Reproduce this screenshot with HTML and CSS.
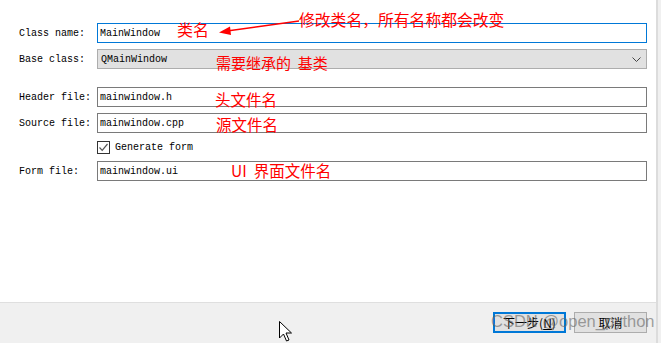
FILE: index.html
```html
<!DOCTYPE html>
<html lang="en">
<head>
    <meta charset="UTF-8">
    <title>Class Information</title>
    <link rel="stylesheet" href="styles.css">
</head>
<body>
    <div class="window">
        <div class="dialog">
            <div class="content">
                <div class="form">
                    <div class="row row-class">
                        <label class="label">Class name:</label>
                        <div class="field field-active">MainWindow</div>
                    </div>
                    <div class="row row-base">
                        <label class="label">Base class:</label>
                        <div class="field field-combo">
                            <span>QMainWindow</span>
                            <svg class="chevron" width="9" height="5" viewBox="0 0 9 5"><path d="M0.5 0.5 L4.5 4.5 L8.5 0.5" fill="none" stroke="#444" stroke-width="1"/></svg>
                        </div>
                    </div>
                    <div class="row row-header">
                        <label class="label">Header file:</label>
                        <div class="field">mainwindow.h</div>
                    </div>
                    <div class="row row-source">
                        <label class="label">Source file:</label>
                        <div class="field">mainwindow.cpp</div>
                    </div>
                    <div class="row row-check">
                        <span class="label"></span>
                        <div class="check">
                            <span class="box">
                                <svg width="11" height="11" viewBox="0 0 11 11"><path d="M1.5 5.5 L4.2 8.3 L9.5 2" fill="none" stroke="#555" stroke-width="1.2"/></svg>
                            </span>
                            <span>Generate form</span>
                        </div>
                    </div>
                    <div class="row row-form">
                        <label class="label">Form file:</label>
                        <div class="field">mainwindow.ui</div>
                    </div>
                </div>

                <!-- red notes drawn over the dialog -->
                <span class="note note-name">类名</span>
                <span class="note note-tip">修改类名，所有名称都会改变</span>
                <svg class="note-arrow" width="84" height="18" viewBox="0 0 84 18">
                    <line x1="82" y1="2" x2="10" y2="12" stroke="#ff0000" stroke-width="1.3"/>
                    <path d="M2 13.5 L13 7.5 L14 16 Z" fill="#ff0000"/>
                </svg>
                <span class="note note-base">需要继承的&nbsp; 基类</span>
                <span class="note note-header">头文件名</span>
                <span class="note note-source">源文件名</span>
                <span class="note note-form">UI&nbsp; 界面文件名</span>
            </div>
            <div class="footer">
                <button class="btn btn-default">下一步(<u>N</u>)</button>
                <button class="btn">取消</button>
                <span class="watermark">CSDN @open_python</span>
                <svg class="cursor" width="14" height="24" viewBox="0 0 14 24">
                    <path d="M0.5 0.5 L0.5 17 L4.5 13 L7.5 20 L10 19 L7 12 L12.5 12 Z" fill="#fff" stroke="#000" stroke-width="1"/>
                </svg>
            </div>
        </div>
        <div class="side"></div>
    </div>
</body>
</html>
```

FILE: styles.css
```css
body {
    margin: 0;
    background: #ffffff;
    font-family: "Liberation Mono", "DejaVu Sans Mono", monospace;
    font-size: 10px;
    color: #000;
}
.window {
    display: flex;
    width: 661px;
    height: 343px;
    overflow: hidden;
}
.dialog {
    width: 656px;
    display: flex;
    flex-direction: column;
}
.side {
    width: 5px;
    background: #f0f0f0;
    border-left: 2px solid #dcdcdc;
    box-sizing: border-box;
}
.content {
    position: relative;
    height: 302px;
    background: #fff;
}
.form {
    display: flex;
    flex-direction: column;
    padding-top: 23px;
}
.row {
    display: flex;
    align-items: center;
    height: 20px;
}
.row-base { margin-top: 6px; }
.row-header { margin-top: 18px; }
.row-source { margin-top: 6px; }
.row-check { margin-top: 4px; }
.row-form { margin-top: 4px; }
.label {
    width: 78px;
    padding-left: 19px;
    flex: none;
}
.field {
    box-sizing: border-box;
    width: 550px;
    height: 20px;
    border: 1px solid #7a7a7a;
    padding-left: 2px;
    display: flex;
    align-items: center;
}
.field-active {
    border-color: #0078d7;
}
.field-combo {
    background: #e1e1e1;
    border-color: #adadad;
    padding-left: 3px;
    justify-content: space-between;
    padding-right: 5px;
}
.check {
    display: flex;
    align-items: center;
    gap: 5px;
}
.check .box {
    box-sizing: border-box;
    width: 13px;
    height: 13px;
    border: 1px solid #333;
    display: flex;
    align-items: center;
    justify-content: center;
}
.note {
    position: absolute;
    color: #ff0000;
    font-family: "Noto Sans CJK SC", sans-serif;
    font-size: 16px;
    line-height: 16px;
    white-space: nowrap;
}
.note-name { left: 177px; top: 21px; }
.note-tip { left: 299px; top: 12px; font-size: 15.8px; }
.note-arrow { position: absolute; left: 217px; top: 19px; }
.note-base { left: 216px; top: 55px; font-size: 15px; }
.note-header { left: 215px; top: 91px; font-size: 15.5px; }
.note-source { left: 216px; top: 116px; font-size: 15.5px; }
.note-form { left: 231px; top: 162px; font-size: 15.5px; }
.footer {
    position: relative;
    flex: 1;
    background: #f0f0f0;
    border-top: 1px solid #dfdfdf;
    display: flex;
    justify-content: flex-end;
    align-items: flex-start;
    gap: 8px;
    padding: 9px 9px 0 0;
}
.btn {
    box-sizing: border-box;
    width: 73px;
    height: 21px;
    background: #e1e1e1;
    border: 1px solid #adadad;
    font-family: "Noto Sans CJK SC", sans-serif;
    font-size: 12px;
    padding: 0;
    color: #000;
}
.btn-default {
    border: 2px solid #0078d7;
}
.watermark {
    position: absolute;
    left: 491px;
    top: 7px;
    font-family: "Liberation Sans", Arial, sans-serif;
    font-size: 16.5px;
    line-height: 22px;
    white-space: nowrap;
    color: rgba(100, 100, 100, 0.6);
}
.cursor {
    position: absolute;
    left: 279px;
    top: 18px;
}
```
